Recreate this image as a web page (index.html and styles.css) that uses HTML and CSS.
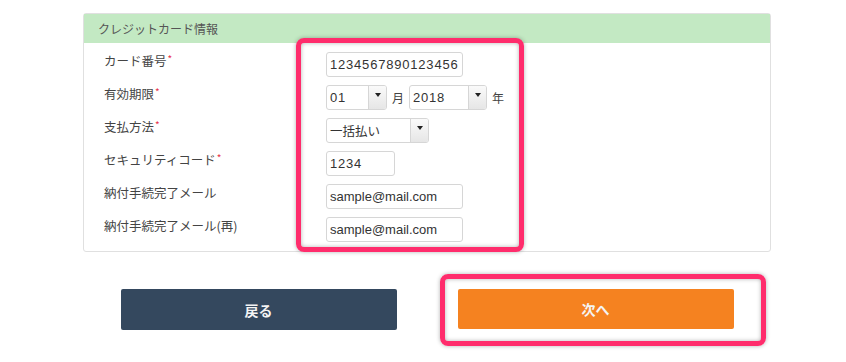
FILE: index.html
```html
<!DOCTYPE html>
<html lang="ja">
<head>
    <meta charset="UTF-8">
    <meta name="viewport" content="width=device-width, initial-scale=1.0">
    <title>クレジットカード情報</title>
    <link rel="stylesheet" href="styles.css">
</head>
<body>
    <main class="wrap">
        <section class="panel">
            <h2 class="panel-head">クレジットカード情報</h2>
            <form class="panel-body" id="cardForm">
                <div class="row">
                    <label>カード番号<span class="req">*</span></label>
                    <input type="text" class="num" value="1234567890123456">
                </div>
                <div class="row">
                    <label>有効期限<span class="req">*</span></label>
                    <div class="inline">
                        <div class="select sel-month"><span class="num">01</span><i></i></div>
                        <span class="unit">月</span>
                        <div class="select sel-year"><span class="num">2018</span><i></i></div>
                        <span class="unit">年</span>
                    </div>
                </div>
                <div class="row">
                    <label>支払方法<span class="req">*</span></label>
                    <div class="select sel-pay"><span>一括払い</span><i></i></div>
                </div>
                <div class="row">
                    <label>セキュリティコード<span class="req">*</span></label>
                    <input type="text" class="num short" value="1234">
                </div>
                <div class="row">
                    <label>納付手続完了メール</label>
                    <input type="text" value="sample@mail.com">
                </div>
                <div class="row">
                    <label>納付手続完了メール(再)</label>
                    <input type="text" value="sample@mail.com">
                </div>
            </form>
        </section>

        <div class="actions">
            <button type="button" class="btn btn-back">戻る</button>
            <button type="button" class="btn btn-next">次へ</button>
        </div>
    </main>

    <!-- 注釈の枠 -->
    <div class="mark mark-form"></div>
    <div class="mark mark-next"></div>
</body>
</html>
```

FILE: styles.css
```css
body {
    font-family: "Noto Sans CJK JP", "Liberation Sans", sans-serif;
    margin: 0;
    padding: 0;
    background-color: #fff;
    color: #444;
}
.wrap {
    width: 688px;
    margin: 13px 0 0 83px;
}
.panel {
    border: 1px solid #e0e0e0;
    border-radius: 3px;
    background: #fff;
}
.panel-head {
    margin: 0;
    height: 29px;
    line-height: 29px;
    padding: 0 14px;
    background-color: #c3e9c3;
    font-size: 12px;
    font-weight: normal;
    color: #555;
}
.panel-body {
    padding: 9px 20px 9px;
    display: flex;
    flex-direction: column;
    gap: 8px;
}
.row {
    display: flex;
    align-items: flex-start;
}
.row label {
    width: 222px;
    flex: none;
    font-size: 12.5px;
    line-height: 18px;
    color: #444;
}
.req {
    color: #e8334a;
    font-size: 10px;
    vertical-align: top;
    line-height: 14px;
    margin-left: 1px;
}
input {
    box-sizing: border-box;
    width: 137px;
    height: 25px;
    padding: 0 3px;
    border: 1px solid #d6d6d6;
    border-radius: 3px;
    font-family: "Liberation Sans", "Noto Sans CJK JP", sans-serif;
    font-size: 13px;
    color: #333;
}
input.short {
    width: 69px;
}
.num {
    letter-spacing: 0.8px;
}
.inline {
    display: flex;
    align-items: center;
}
.unit {
    font-size: 12px;
    margin: 0 5px;
    color: #444;
}
.select {
    box-sizing: border-box;
    height: 25px;
    display: flex;
    border: 1px solid #d6d6d6;
    border-radius: 3px;
    font-family: "Liberation Sans", "Noto Sans CJK JP", sans-serif;
    font-size: 13px;
    color: #333;
    background: #fff;
}
.select span {
    flex: 1;
    padding-left: 3px;
    line-height: 23px;
}
.select i {
    width: 17px;
    border-left: 1px solid #d6d6d6;
    border-radius: 0 2px 2px 0;
    background: linear-gradient(#fafafa, #e6e6e6);
    position: relative;
}
.select i::after {
    content: "";
    position: absolute;
    left: 6px;
    top: 7px;
    border-left: 3px solid transparent;
    border-right: 3px solid transparent;
    border-top: 4px solid #222;
}
.sel-month {
    width: 61px;
}
.sel-year {
    width: 78px;
}
.sel-pay {
    width: 103px;
}
.sel-pay span {
    font-family: "Noto Sans CJK JP", sans-serif;
    font-size: 12.5px;
}
.actions {
    display: flex;
    justify-content: center;
    gap: 61px;
    margin-top: 37px;
}
.btn {
    width: 276px;
    height: 41px;
    border: none;
    border-radius: 2px;
    font-family: "Noto Sans CJK JP", sans-serif;
    font-size: 14px;
    font-weight: bold;
    color: #f4f4f4;
    cursor: pointer;
}
.btn-back {
    background-color: #34485e;
}
.btn-next {
    background-color: #f58220;
    height: 40px;
}
.mark {
    position: absolute;
    box-sizing: border-box;
    border: 5px solid #ff2c6c;
    border-radius: 8px;
    box-shadow: 0 0 4px rgba(0, 0, 0, 0.3), inset 0 0 4px rgba(0, 0, 0, 0.3);
}
.mark-form {
    left: 296px;
    top: 38px;
    width: 228px;
    height: 214px;
}
.mark-next {
    left: 440px;
    top: 274px;
    width: 326px;
    height: 72px;
}
```
